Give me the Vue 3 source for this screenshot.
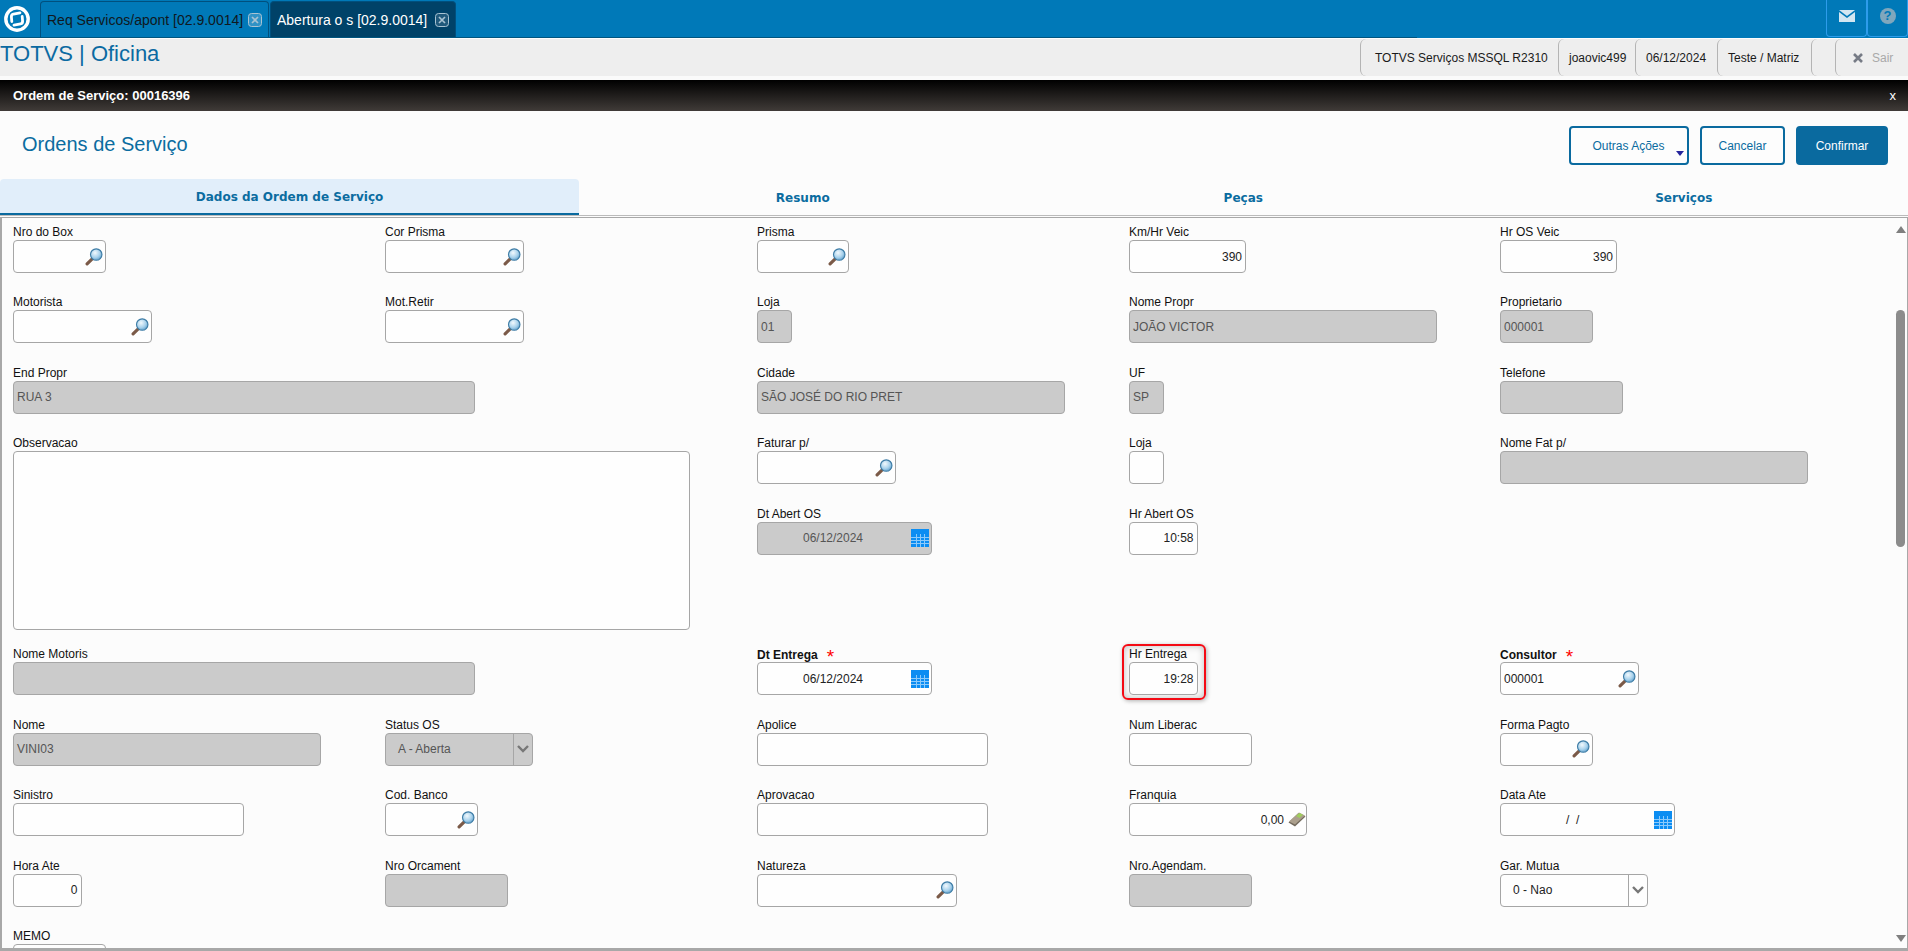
<script setup>
const rows = [
  [
    { label: 'Nro do Box', col: 1, w: 92.5, kind: 'search' },
    { label: 'Cor Prisma', col: 2, w: 139, kind: 'search' },
    { label: 'Prisma', col: 3, w: 92, kind: 'search' },
    { label: 'Km/Hr Veic', col: 4, w: 117, value: '390', align: 'right' },
    { label: 'Hr OS Veic', col: 5, w: 117, value: '390', align: 'right' }
  ],
  [
    { label: 'Motorista', col: 1, w: 139, kind: 'search' },
    { label: 'Mot.Retir', col: 2, w: 139, kind: 'search' },
    { label: 'Loja', col: 3, w: 35, value: '01', off: true },
    { label: 'Nome Propr', col: 4, w: 308, value: 'JOÃO VICTOR', off: true },
    { label: 'Proprietario', col: 5, w: 92.5, value: '000001', off: true }
  ],
  [
    { label: 'End Propr', col: 1, w: 462, value: 'RUA 3', off: true },
    { label: 'Cidade', col: 3, w: 308, value: 'SÃO JOSÉ DO RIO PRET', off: true },
    { label: 'UF', col: 4, w: 35, value: 'SP', off: true },
    { label: 'Telefone', col: 5, w: 123, off: true }
  ],
  [
    { label: 'Observacao', col: 1, w: 677, h: 179, span: 3 },
    { label: 'Faturar p/', col: 3, w: 139, kind: 'search' },
    { label: 'Loja', col: 4, w: 35 },
    { label: 'Nome Fat p/', col: 5, w: 308, off: true }
  ],
  [
    { label: 'Dt Abert OS', col: 3, w: 175, value: '06/12/2024', kind: 'date', off: true },
    { label: 'Hr Abert OS', col: 4, w: 68.5, value: '10:58', align: 'right' }
  ],
  [],
  [
    { label: 'Nome Motoris', col: 1, w: 462, off: true },
    { label: 'Dt Entrega', col: 3, w: 175, value: '06/12/2024', kind: 'date', req: true },
    { label: 'Hr Entrega', col: 4, w: 68.5, value: '19:28', align: 'right', mark: true },
    { label: 'Consultor', col: 5, w: 139, value: '000001', kind: 'search', req: true }
  ],
  [
    { label: 'Nome', col: 1, w: 308, value: 'VINI03', off: true },
    { label: 'Status OS', col: 2, w: 148, value: 'A - Aberta', kind: 'select', off: true },
    { label: 'Apolice', col: 3, w: 231 },
    { label: 'Num Liberac', col: 4, w: 123 },
    { label: 'Forma Pagto', col: 5, w: 92.5, kind: 'search' }
  ],
  [
    { label: 'Sinistro', col: 1, w: 231 },
    { label: 'Cod. Banco', col: 2, w: 92.5, kind: 'search' },
    { label: 'Aprovacao', col: 3, w: 231 },
    { label: 'Franquia', col: 4, w: 178, value: '0,00', align: 'right', kind: 'money' },
    { label: 'Data Ate', col: 5, w: 175, value: '/\u00a0\u00a0/\u00a0\u00a0', kind: 'date' }
  ],
  [
    { label: 'Hora Ate', col: 1, w: 68.5, value: '0', align: 'right' },
    { label: 'Nro Orcament', col: 2, w: 123, off: true },
    { label: 'Natureza', col: 3, w: 200, kind: 'search' },
    { label: 'Nro.Agendam.', col: 4, w: 123, off: true },
    { label: 'Gar. Mutua', col: 5, w: 148, value: '0 - Nao', kind: 'select' }
  ],
  [{ label: 'MEMO', col: 1, w: 92.5 }]
]

const fields = rows.flatMap((list, i) => list.map((f) => ({ ...f, row: i + 1 })))

const cell = (f) => ({
  gridColumn: f.col,
  gridRow: f.span ? `${f.row} / span ${f.span}` : f.row,
  width: `${f.w}px`
})
const boxSize = (f) => (f.h ? { height: `${f.h}px` } : {})

const tabs = ['Resumo', 'Peças', 'Serviços']
const gridX = [5, 9, 13]
const gridY = [8, 11, 14]
</script>

<template>
  <div class="page">
    <svg class="defs" width="0" height="0" aria-hidden="true">
      <defs>
        <radialGradient id="lens" cx="0.4" cy="0.35" r="0.75">
          <stop offset="0" stop-color="#f2f9fd" />
          <stop offset="0.55" stop-color="#a9d2ec" />
          <stop offset="1" stop-color="#4d93c4" />
        </radialGradient>
      </defs>
    </svg>

    <div class="topbar">
      <div class="tabstrip">
        <svg class="logo" width="30" height="30" viewBox="0 0 30 30">
          <circle cx="15" cy="15" r="11.2" fill="none" stroke="#fff" stroke-width="3.4" />
          <path d="M9.8 17.5 L9.4 13 Q9.2 10.6 11.5 10 L18 8.8" fill="none" stroke="#fff" stroke-width="2.8" stroke-linecap="round" />
          <path d="M20.2 12.5 L20.6 17 Q20.8 19.4 18.5 20 L12 21.2" fill="none" stroke="#fff" stroke-width="2.8" stroke-linecap="round" />
        </svg>
        <div class="wintab">
          <span>Req Servicos/apont [02.9.0014]</span>
          <svg class="tabclose" width="14" height="14" viewBox="0 0 14 14">
            <rect x="0.5" y="0.5" width="13" height="13" rx="3" fill="#ffffff30" stroke="#a9c3d2" />
            <path d="M4 4 L10 10 M10 4 L4 10" stroke="#a9c3d2" stroke-width="1.7" />
          </svg>
        </div>
        <div class="wintab current">
          <span>Abertura o s [02.9.0014]</span>
          <svg class="tabclose" width="14" height="14" viewBox="0 0 14 14">
            <rect x="0.5" y="0.5" width="13" height="13" rx="3" fill="#ffffff20" stroke="#a9c3d2" />
            <path d="M4 4 L10 10 M10 4 L4 10" stroke="#a9c3d2" stroke-width="1.7" />
          </svg>
        </div>
      </div>
      <div class="topicons">
        <div class="topicon">
          <svg width="16" height="12" viewBox="0 0 16 12">
            <path d="M0 0 H16 L8 6 Z" fill="#d3e6f1" />
            <path d="M0 2 L8 8 L16 2 V12 H0 Z" fill="#d3e6f1" />
          </svg>
        </div>
        <div class="topicon"><span class="help">?</span></div>
      </div>
    </div>

    <div class="apphead">
      <div class="appname">TOTVS | Oficina</div>
      <div class="seg s1">TOTVS Serviços MSSQL R2310</div>
      <div class="seg s2">joaovic499</div>
      <div class="seg s3">06/12/2024</div>
      <div class="seg s4">Teste / Matriz</div>
      <div class="seg s5"></div>
      <div class="seg s6">
        <svg width="10" height="10" viewBox="0 0 10 10">
          <path d="M1 1 L9 9 M9 1 L1 9" stroke="#767b85" stroke-width="2.6" />
        </svg>
        <span>Sair</span>
      </div>
    </div>

    <div class="gapband"></div>

    <div class="winbar">
      <span>Ordem de Serviço: 00016396</span>
      <span class="winx">x</span>
    </div>

    <div class="panelhead">
      <h1>Ordens de Serviço</h1>
      <div class="actions">
        <button class="btn more">Outras Ações<i class="caret"></i></button>
        <button class="btn cancel">Cancelar</button>
        <button class="btn primary">Confirmar</button>
      </div>
    </div>

    <div class="tabs">
      <div class="tab active">Dados da Ordem de Serviço</div>
      <div v-for="t in tabs" :key="t" class="tab">{{ t }}</div>
    </div>

    <div class="form">
      <div class="grid">
        <div v-for="f in fields" :key="f.label + f.row" class="field" :style="cell(f)">
          <div v-if="f.mark" class="mark"></div>
          <label :class="{ strong: f.req }">
            {{ f.label }}<span v-if="f.req" class="star">*</span>
          </label>
          <div class="box" :class="{ off: f.off, right: f.align === 'right', date: f.kind === 'date', select: f.kind === 'select' }" :style="boxSize(f)">
            <span class="val">{{ f.value }}</span>

            <svg v-if="f.kind === 'search'" class="ico" width="18" height="18" viewBox="0 0 17 17">
              <path d="M6.8 10.2 L2 15" stroke="#7b5a48" stroke-width="3" stroke-linecap="round" />
              <circle cx="10.6" cy="6.2" r="5.4" fill="url(#lens)" stroke="#3f7da6" stroke-width="1.1" />
            </svg>

            <svg v-if="f.kind === 'date'" class="ico cal" width="18" height="18" viewBox="0 0 18 18">
              <rect width="18" height="18" fill="#0c8df2" />
              <path v-for="x in gridX" :key="'x' + x" :d="`M${x}.5 5 V18`" stroke="#8ccafb" stroke-width="1" />
              <path v-for="y in gridY" :key="'y' + y" :d="`M0 ${y}.5 H18`" stroke="#8ccafb" stroke-width="1" />
            </svg>

            <svg v-if="f.kind === 'money'" class="ico cash" width="18" height="15" viewBox="0 0 18 15">
              <path d="M0.5 10.5 L10.5 1 L17.5 4.5 L7 14.5 Z" fill="#736a5c" />
              <path d="M1 9.5 L11 0.5 L17 3.5 L7 12.5 Z" fill="#ab9f8c" />
              <path d="M8 4 L11.5 1 L15 2.8 L11.5 6 Z" fill="#9fce5c" />
            </svg>

            <div v-if="f.kind === 'select'" class="drop">
              <svg width="12" height="8" viewBox="0 0 12 8">
                <path d="M1 1 L6 6 L11 1" fill="none" stroke="#777" stroke-width="2.4" />
              </svg>
            </div>
          </div>
        </div>
      </div>

      <div class="scroll">
        <i class="arrow up"></i>
        <i class="thumb"></i>
        <i class="arrow down"></i>
      </div>
    </div>
  </div>
</template>

<style>
html, body { margin: 0; overflow: hidden; }
</style>

<style scoped>
.page {
  display: flex;
  flex-direction: column;
  height: 951px;
  background: #fcfcfc;
  font-family: "Liberation Sans", Arial, sans-serif;
  font-size: 12px;
  color: #111;
  overflow: hidden;
  position: relative;
}
.defs { position: absolute; }

.topbar {
  flex: none;
  height: 38px;
  background: #0079b8;
  display: flex;
  justify-content: space-between;
}
.tabstrip {
  width: 1417px;
  height: 38px;
  box-sizing: border-box;
  border-bottom: 1px solid #00557f;
  display: flex;
  align-items: flex-end;
}
.logo { align-self: center; margin: 0 8px 0 2px; }
.wintab {
  width: 229px;
  height: 36px;
  box-sizing: border-box;
  border: 1px solid #00507e;
  border-bottom: none;
  border-radius: 4px 4px 0 0;
  display: flex;
  align-items: center;
  padding: 0 6px;
  font-size: 14px;
  color: #101820;
  white-space: nowrap;
}
.wintab span { flex: 1; }
.wintab.current {
  width: 186px;
  margin-left: 1px;
  background: #004268;
  color: #fff;
}
.tabclose { flex: none; }

.topicons { display: flex; }
.topicon {
  width: 41px;
  height: 37px;
  box-sizing: border-box;
  border: 1px solid #2d9ceb;
  border-top: none;
  border-radius: 0 0 4px 4px;
  display: flex;
  align-items: center;
  justify-content: center;
  padding-bottom: 4px;
}
.help {
  width: 16px;
  height: 16px;
  border-radius: 50%;
  background: #7fa7bd;
  color: #0079b8;
  font-weight: bold;
  font-size: 13px;
  line-height: 16px;
  text-align: center;
}

.apphead {
  flex: none;
  height: 37px;
  margin-top: 1px;
  background: #eeeeee;
  display: flex;
  align-items: center;
}
.appname {
  flex: 1;
  font-size: 22px;
  color: #0b6aa2;
  line-height: 28px;
  margin-top: -7px;
}
.seg {
  height: 37px;
  box-sizing: border-box;
  border-left: 1px solid #b4b4b4;
  border-radius: 6px 0 0 6px;
  display: flex;
  align-items: center;
  padding-top: 1px;
  padding-left: 10px;
  color: #1a1a1a;
  white-space: nowrap;
}
.s1 { width: 198px; padding-left: 14px; }
.s2 { width: 77px; }
.s3 { width: 82px; }
.s4 { width: 94px; }
.s5 { width: 24px; }
.s6 { width: 73px; padding-left: 17px; gap: 9px; color: #a9a9a9; }

.gapband { flex: none; height: 4px; background: #fafafa; }

.winbar {
  flex: none;
  height: 31px;
  background: linear-gradient(#000000, #403b38);
  color: #fff;
  display: flex;
  justify-content: space-between;
  align-items: center;
  padding: 0 12px 0 13px;
  font-size: 13px;
  font-weight: bold;
}
.winx { font-size: 13px; font-weight: normal; }

.panelhead {
  flex: none;
  height: 68px;
  box-sizing: border-box;
  padding: 15px 20px 0 22px;
  display: flex;
  justify-content: space-between;
  align-items: flex-start;
}
h1 {
  margin: 0;
  font-size: 20px;
  font-weight: normal;
  line-height: 36px;
  color: #0b6ca0;
}
.actions { display: flex; gap: 11px; }
.btn {
  height: 39px;
  box-sizing: border-box;
  border: 2px solid #0a6a9f;
  border-radius: 4px;
  background: #fdfdfd;
  color: #0b6ca0;
  font: 12px "Liberation Sans", Arial, sans-serif;
  padding: 0;
  position: relative;
}
.more { width: 120px; padding-right: 1px; }
.cancel { width: 85px; }
.primary { width: 92px; background: #0a6a9f; color: #fff; }
.caret {
  position: absolute;
  right: 3px;
  bottom: 7px;
  border: 4px solid transparent;
  border-top: 5px solid #25259c;
  border-bottom: none;
}

.tabs {
  flex: none;
  height: 37px;
  display: flex;
  box-sizing: border-box;
  border-bottom: 1px solid #bbbbbb;
}
.tab {
  flex: none;
  width: 440.5px;
  font-family: "DejaVu Sans", Verdana, sans-serif;
  font-weight: bold;
  font-size: 12px;
  color: #0b6ca0;
  display: flex;
  align-items: center;
  justify-content: center;
  padding-top: 1px;
  box-sizing: border-box;
}
.tab.active {
  width: 579px;
  height: 36px;
  margin-right: 3.5px;
  background: #e1eefa;
  border-bottom: 2px solid #0a6a9f;
  border-radius: 4px 4px 0 0;
}

.form {
  flex: 1;
  min-height: 0;
  margin-top: 1px;
  box-sizing: border-box;
  border: 2px solid #a8a8a8;
  border-width: 1px 1px 3px 2px;
  position: relative;
  overflow: hidden;
}
.grid {
  display: grid;
  grid-template-columns: 372px 372px 372px 371px 372px;
  grid-auto-rows: 70.4px;
  padding: 6px 0 0 11px;
}
.field { position: relative; }
label {
  display: block;
  height: 16px;
  line-height: 16px;
  white-space: nowrap;
  color: #111;
}
.strong { font-weight: bold; margin-top: 1px; margin-bottom: -1px; }
.star {
  color: #f00;
  font-size: 19px;
  font-weight: normal;
  line-height: 10px;
  margin-left: 9px;
  vertical-align: -4px;
}
.box {
  height: 33px;
  box-sizing: border-box;
  border: 1px solid #a6a6a6;
  border-radius: 4px;
  background: #fefefe;
  display: flex;
  align-items: center;
  padding: 0 3px;
  color: #222;
  position: relative;
}
.val { flex: 1; white-space: nowrap; min-width: 0; }
.box.right .val { text-align: right; }
.box.date .val { text-align: center; padding-right: 4px; }
.box.off { background: #cbcbcb; color: #555; }
.box.select { padding: 0 0 0 12px; }
.ico { flex: none; margin-right: -1px; margin-left: 2px; }
.cal { margin-right: -1px; }
.cash { margin-right: -3px; margin-left: 4px; }
.drop {
  flex: none;
  width: 18px;
  height: 100%;
  border-left: 1px solid #a6a6a6;
  display: flex;
  align-items: center;
  justify-content: center;
}
.mark {
  position: absolute;
  left: -7px;
  right: -8px;
  top: -2px;
  bottom: 17px;
  box-sizing: border-box;
  border: 2px solid #f40a14;
  border-radius: 6px;
  box-shadow: 1px 1px 4px rgba(0, 0, 0, 0.3), inset 0 0 7px rgba(0, 0, 0, 0.25);
  pointer-events: none;
}

.scroll {
  position: absolute;
  top: 8px;
  right: 1px;
  bottom: 6px;
  width: 10px;
}
.scroll i { position: absolute; left: 0; }
.arrow { width: 0; height: 0; border-left: 5px solid transparent; border-right: 5px solid transparent; }
.up { top: 0; border-bottom: 7px solid #7f7f7f; }
.down { bottom: 0; border-top: 7px solid #7f7f7f; }
.thumb {
  top: 84px;
  width: 9px;
  height: 237px;
  border-radius: 5px;
  background: #8c8c8c;
}
</style>
